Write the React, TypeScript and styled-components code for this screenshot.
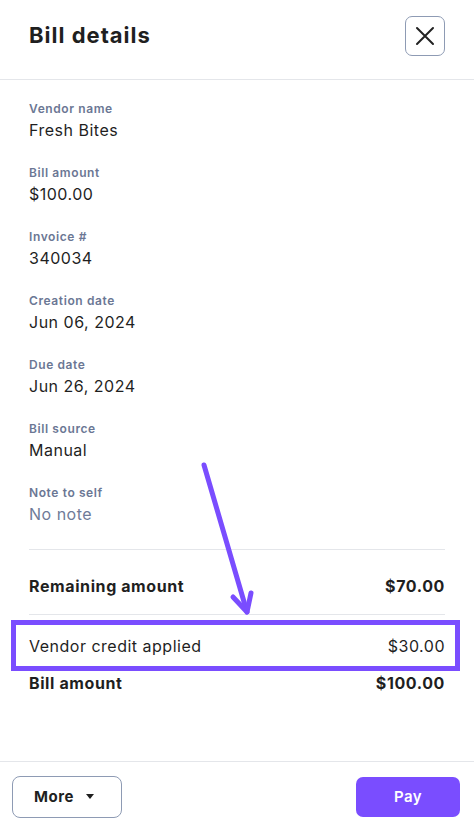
import React from "react";
import styled, { createGlobalStyle } from "styled-components";

const GlobalStyle = createGlobalStyle`
  html, body {
    margin: 0;
    padding: 0;
    background: #ffffff;
  }
  body {
    font-family: Inter, "Open Sans", sans-serif;
    color: #1f1f1f;
  }
`;

const fields = [
  { label: "Vendor name", value: "Fresh Bites" },
  { label: "Bill amount", value: "$100.00" },
  { label: "Invoice #", value: "340034" },
  { label: "Creation date", value: "Jun 06, 2024" },
  { label: "Due date", value: "Jun 26, 2024" },
  { label: "Bill source", value: "Manual" },
  { label: "Note to self", value: "No note", muted: true },
];

const App = () => {
  return (
    <Page>
      <GlobalStyle />
      <Header>
        <Title>Bill details</Title>
        <CloseButton aria-label="Close">
          <svg width="22" height="22" viewBox="0 0 22 22">
            <path
              d="M3 3 L19 19 M19 3 L3 19"
              stroke="#222"
              strokeWidth="2"
              strokeLinecap="round"
            />
          </svg>
        </CloseButton>
      </Header>

      <Body>
        <FieldList>
          {fields.map((f) => (
            <Field key={f.label}>
              <Label>{f.label}</Label>
              <Value $muted={f.muted}>{f.value}</Value>
            </Field>
          ))}
        </FieldList>

        <Divider />
        <SummaryRow $strong $pad="24px 0 16px">
          <span>Remaining amount</span>
          <span>$70.00</span>
        </SummaryRow>
        <Divider />

        <Highlight>
          <span>Vendor credit applied</span>
          <span>$30.00</span>
        </Highlight>

        <SummaryRow $strong $pad="0">
          <span>Bill amount</span>
          <span>$100.00</span>
        </SummaryRow>
      </Body>

      <Footer>
        <MoreButton>
          More
          <Caret />
        </MoreButton>
        <PayButton>Pay</PayButton>
      </Footer>

      <Arrow width="70" height="170" viewBox="0 0 70 170">
        <path
          d="M10 10 L53 157"
          stroke="#7a4dff"
          strokeWidth="5"
          strokeLinecap="round"
          fill="none"
        />
        <path
          d="M39 142 L53 157 L57 138"
          stroke="#7a4dff"
          strokeWidth="5"
          strokeLinecap="round"
          strokeLinejoin="round"
          fill="none"
        />
      </Arrow>
    </Page>
  );
};

export default App;

const Page = styled.div`
  position: relative;
  width: 474px;
  height: 828px;
  display: flex;
  flex-direction: column;
  overflow: hidden;
`;

const Header = styled.div`
  height: 80px;
  border-bottom: 1px solid #e4e6ea;
  display: flex;
  align-items: center;
  justify-content: space-between;
  padding: 0 29px 9px 29px;
  box-sizing: border-box;
`;

const Title = styled.h1`
  margin: 0;
  font-size: 22px;
  font-weight: 700;
  letter-spacing: 1px;
  color: #1f1f1f;
`;

const CloseButton = styled.button`
  width: 40px;
  height: 40px;
  border: 1px solid #8e9bb4;
  border-radius: 7px;
  background: #fff;
  display: flex;
  align-items: center;
  justify-content: center;
  padding: 0;
  margin-top: 1px;
`;

const Body = styled.div`
  flex: 1;
  padding: 20px 29px 0 29px;
  display: flex;
  flex-direction: column;
`;

const FieldList = styled.div`
  display: flex;
  flex-direction: column;
  gap: 22px;
`;

const Field = styled.div`
  display: flex;
  flex-direction: column;
`;

const Label = styled.div`
  font-size: 12px;
  line-height: 18px;
  font-weight: 600;
  letter-spacing: 0.6px;
  color: #6b7794;
`;

const Value = styled.div<{ $muted?: boolean }>`
  font-size: 16px;
  line-height: 24px;
  letter-spacing: 0.5px;
  color: ${(p) => (p.$muted ? "#6f7b98" : "#1f1f1f")};
`;

const Divider = styled.div`
  height: 1px;
  background: #e4e6ea;
  margin-top: 23px;
`;

const SummaryRow = styled.div<{ $strong?: boolean; $pad: string }>`
  display: flex;
  justify-content: space-between;
  align-items: center;
  font-size: 16px;
  line-height: 24px;
  letter-spacing: 0.6px;
  font-weight: ${(p) => (p.$strong ? 700 : 400)};
  padding: ${(p) => p.$pad};
  & + ${Divider} {
    margin-top: 0;
  }
`;

const Highlight = styled.div`
  margin: 5px -15px 0 -18px;
  border: 5px solid #7a4dff;
  padding: 0 10px 0 13px;
  height: 41px;
  display: flex;
  justify-content: space-between;
  align-items: center;
  font-size: 16px;
  letter-spacing: 0.5px;
  color: #1f1f1f;
`;

const Footer = styled.div`
  height: 67px;
  border-top: 1px solid #e4e6ea;
  box-sizing: border-box;
  display: flex;
  align-items: center;
  justify-content: space-between;
  padding: 3px 14px 0 12px;
`;

const MoreButton = styled.button`
  width: 110px;
  height: 42px;
  border: 1px solid #8e9bb4;
  border-radius: 8px;
  background: #fff;
  display: flex;
  align-items: center;
  justify-content: center;
  gap: 12px;
  font-family: inherit;
  font-size: 15px;
  font-weight: 700;
  letter-spacing: 0.5px;
  color: #1f1f1f;
  padding: 0 6px 0 0;
`;

const Caret = styled.span`
  width: 0;
  height: 0;
  border-left: 4px solid transparent;
  border-right: 4px solid transparent;
  border-top: 5px solid #1f1f1f;
`;

const PayButton = styled.button`
  width: 104px;
  height: 40px;
  border: none;
  border-radius: 7px;
  background: #7a4dff;
  color: #fff;
  font-family: inherit;
  font-size: 15px;
  font-weight: 600;
  letter-spacing: 0.5px;
`;

const Arrow = styled.svg`
  position: absolute;
  left: 194px;
  top: 455px;
  pointer-events: none;
`;
